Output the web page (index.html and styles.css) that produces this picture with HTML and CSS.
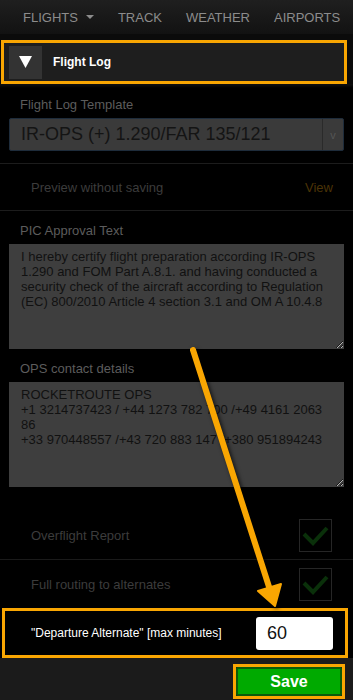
FILE: index.html
```html
<!DOCTYPE html>
<html>
<head>
<meta charset="utf-8">
<link rel="stylesheet" href="styles.css">
</head>
<body>
<div class="page">
  <nav class="topnav">
    <span class="nav-item">FLIGHTS<span class="caret"></span></span>
    <span class="nav-item">TRACK</span>
    <span class="nav-item">WEATHER</span>
    <span class="nav-item">AIRPORTS</span>
  </nav>
  <div class="panel-head">
    <div class="toggle"><svg width="13" height="12" viewBox="0 0 13 12"><polygon points="0,0 13,0 6.5,12" fill="#fff"/></svg></div>
    <span class="panel-title">Flight Log</span>
  </div>
  <div class="content">
    <div class="field-label first">Flight Log Template</div>
    <div class="select">
      <span class="select-text">IR-OPS (+) 1.290/FAR 135/121</span>
      <span class="select-arrow">v</span>
    </div>
    <div class="preview-row">
      <span class="preview-text">Preview without saving</span>
      <span class="view-link">View</span>
    </div>
    <div class="field-label">PIC Approval Text</div>
    <textarea class="area">I hereby certify flight preparation according IR-OPS 1.290 and FOM Part A.8.1. and having conducted a security check of the aircraft according to Regulation (EC) 800/2010 Article 4 section 3.1 and OM A 10.4.8</textarea>
    <div class="field-label">OPS contact details</div>
    <textarea class="area">ROCKETROUTE OPS
+1 3214737423 / +44 1273 782 700 /+49 4161 2063 86
+33 970448557 /+43 720 883 147 /+380 951894243</textarea>
    <div class="check-list">
      <div class="check-row">
        <span class="check-label">Overflight Report</span>
        <span class="checkbox"><svg width="31" height="31" viewBox="0 0 31 31"><polyline points="4,14 13,23 27,8" fill="none" stroke="#0a300a" stroke-width="4"/></svg></span>
      </div>
      <div class="check-row">
        <span class="check-label">Full routing to alternates</span>
        <span class="checkbox"><svg width="31" height="31" viewBox="0 0 31 31"><polyline points="4,14 13,23 27,8" fill="none" stroke="#0a300a" stroke-width="4"/></svg></span>
      </div>
    </div>
    <div class="alt-box">
      <span class="alt-label">"Departure Alternate" [max minutes]</span>
      <span class="alt-input">60</span>
    </div>
  </div>
  <div class="footer">
    <div class="save-wrap"><button class="save-btn">Save</button></div>
  </div>
  <svg class="arrow" width="353" height="700" viewBox="0 0 353 700">
    <line x1="193" y1="350" x2="271" y2="593" stroke="#f9a602" stroke-width="6" stroke-linecap="round"/>
    <polygon points="258,591 281,584 275,606" fill="#f9a602" stroke="#f9a602" stroke-width="2" stroke-linejoin="round"/>
  </svg>
</div>
</body>
</html>
```
FILE: styles.css
```css
* { box-sizing: border-box; }
html, body { margin: 0; padding: 0; }
body {
  background: #000;
  font-family: "Liberation Sans", Arial, sans-serif;
  width: 353px;
  height: 700px;
  overflow: hidden;
}
.page { position: relative; width: 353px; height: 700px; background: #0b0b0b; }
.topnav {
  height: 34px;
  background: linear-gradient(#1f1f1f, #121212);
  display: flex;
  align-items: center;
  padding-left: 23px;
  gap: 24px;
}
.nav-item {
  color: #8c8c8c;
  font-size: 13px;
  display: flex;
  align-items: center;
}
.caret {
  display: inline-block;
  width: 0; height: 0;
  border-left: 4px solid transparent;
  border-right: 4px solid transparent;
  border-top: 4px solid #8c8c8c;
  margin-left: 8px;
}
.panel-head {
  margin: 6px 6px 0 1px;
  height: 44px;
  border: 3px solid #f9a602;
  background: #1e1e1e;
  display: flex;
  align-items: center;
  padding-left: 5px;
  gap: 11px;
}
.toggle {
  width: 33px; height: 33px;
  background: #333;
  display: flex; align-items: center; justify-content: center;
}
.panel-title { color: #fff; font-weight: bold; font-size: 12px; }
.content {
  background: #000;
  padding-top: 4px;
  box-shadow: inset 0 4px 3px -2px #111;
}
.field-label {
  color: #5c5c5c;
  font-size: 13px;
  line-height: 16px;
  margin: 12px 0 5px 20px;
}
.field-label.first { margin-top: 9px; }
.select {
  margin: 0 9px;
  height: 33px;
  background: #3a3a3a;
  border: 1px solid #1e2c3b;
  border-radius: 2px;
  display: flex;
  align-items: center;
}
.select-text {
  flex: 1;
  color: #141414;
  font-size: 18px;
  padding-left: 11px;
}
.select-arrow {
  width: 21px;
  height: 100%;
  border-left: 1px solid #2a2a2a;
  color: #555;
  font-size: 11px;
  display: flex; align-items: center; justify-content: center;
}
.preview-row {
  margin-top: 12px;
  height: 48px;
  border-top: 1px solid #1c1c1c;
  border-bottom: 1px solid #1c1c1c;
  display: flex;
  align-items: center;
  justify-content: space-between;
  padding: 0 20px 0 31px;
  font-size: 13px;
}
.preview-text { color: #3c3c3c; }
.view-link { color: #4b3306; }
.area {
  display: block;
  margin: 0 9px;
  width: 335px;
  height: 105px;
  background: #3e3e3e;
  border: none;
  border-radius: 0;
  color: #111;
  font-family: "Liberation Sans", Arial, sans-serif;
  font-size: 13px;
  line-height: 15px;
  padding: 5px 12px;
  resize: vertical;
  outline: none;
  overflow: hidden;
}
.check-list { margin-top: 24px; }
.check-row {
  height: 48px;
  display: flex;
  align-items: center;
  justify-content: space-between;
  padding: 0 21px 0 31px;
}
.check-row:first-child { border-bottom: 1px solid #1a1a1a; height: 49px; }
.check-label { color: #3c3c3c; font-size: 13px; }
.checkbox {
  width: 33px; height: 33px;
  border: 1px solid #262626;
  display: flex;
}
.alt-box {
  margin-left: 2px;
  width: 346px;
  height: 50px;
  border: 3px solid #f9a602;
  background: #000;
  display: flex;
  align-items: center;
  justify-content: space-between;
  padding: 0 12px 0 26px;
}
.alt-label { color: #fff; font-size: 12px; }
.alt-input {
  width: 77px;
  height: 33px;
  background: #fff;
  border-radius: 3px;
  color: #111;
  font-size: 18px;
  display: flex;
  align-items: center;
  padding-left: 11px;
}
.footer {
  background: #1b1b1b;
  height: 42px;
  display: flex;
  justify-content: flex-end;
  padding: 6px 8px 0 0;
}
.save-wrap {
  width: 112px;
  height: 35px;
  border: 3px solid #f9a602;
  display: flex;
}
.save-btn {
  flex: 1;
  background: #00aa00;
  border: 2px solid #0a5a0a;
  border-radius: 2px;
  color: #fff;
  font-family: "Liberation Sans", Arial, sans-serif;
  font-weight: bold;
  font-size: 16px;
  padding: 0;
}
.arrow {
  position: absolute;
  top: 0; left: 0;
  pointer-events: none;
  filter: drop-shadow(2px 2px 2px rgba(0,0,0,0.7));
}
```
